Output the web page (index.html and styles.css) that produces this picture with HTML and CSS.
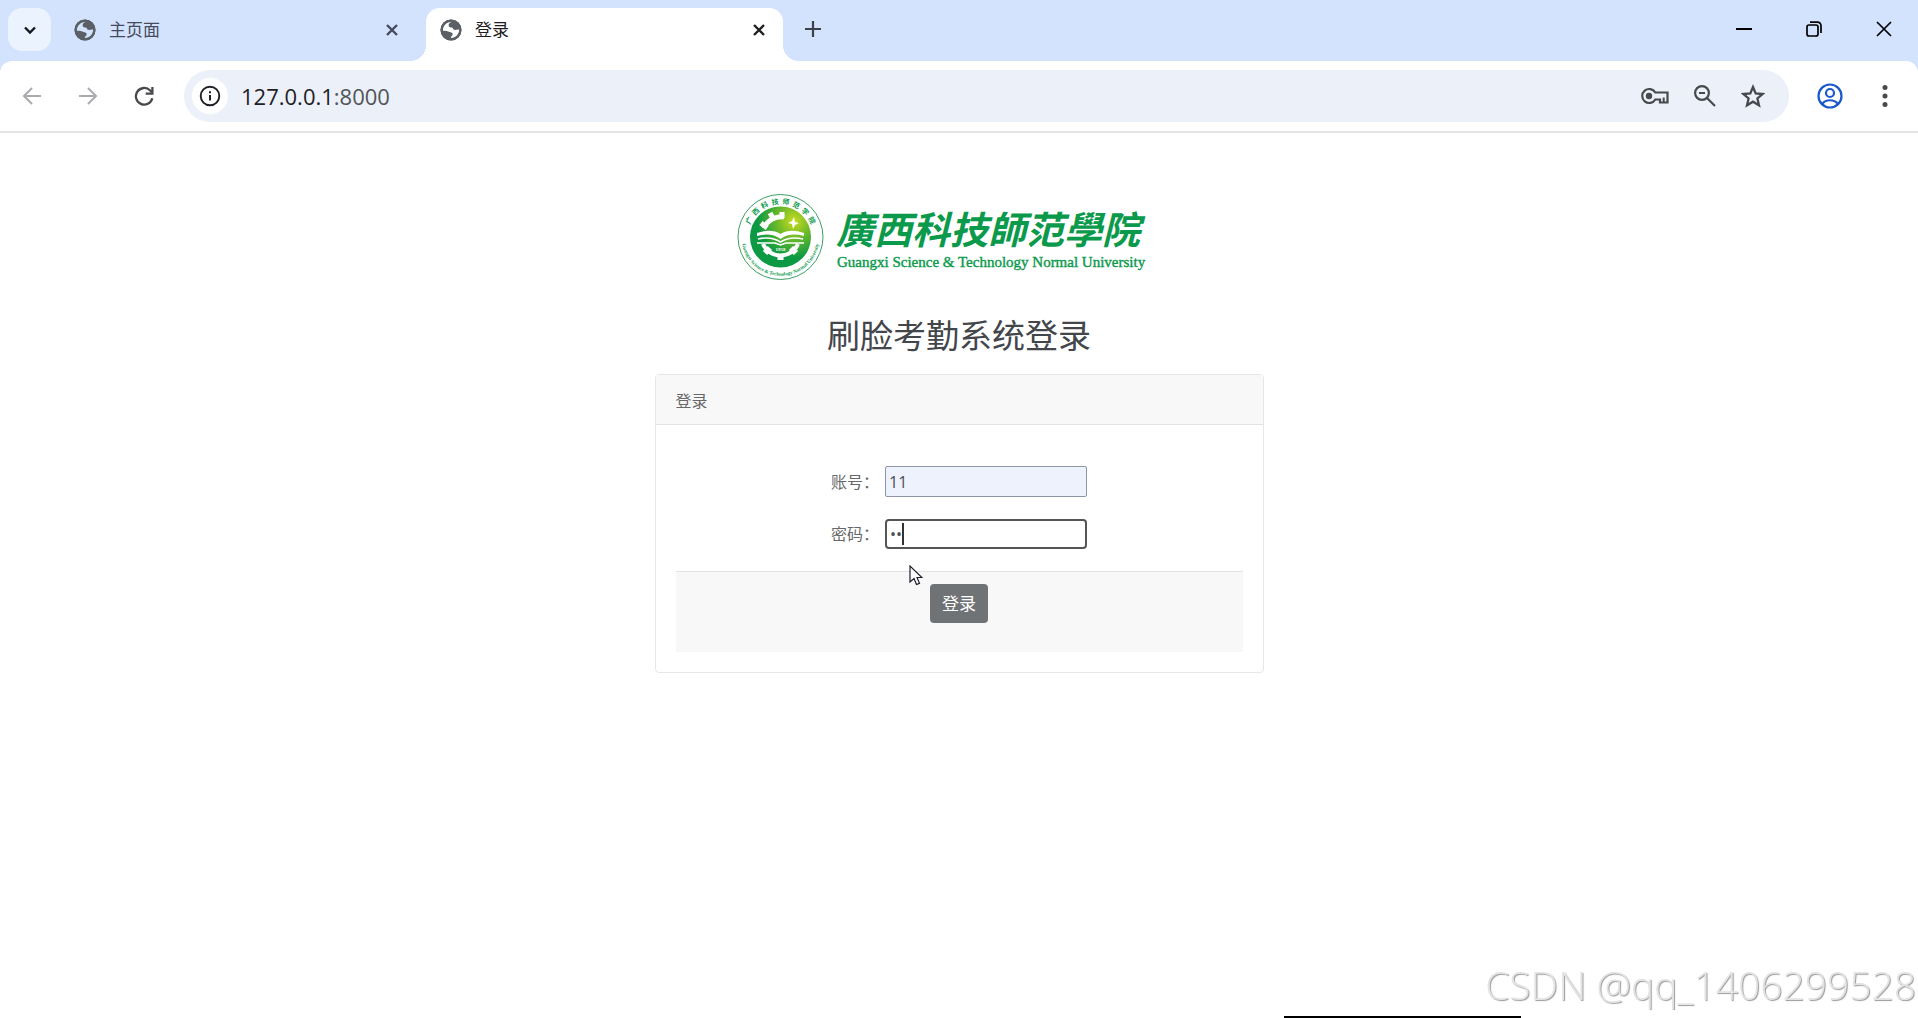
FILE: index.html
```html
<!DOCTYPE html>
<html lang="zh">
<head>
    <meta charset="UTF-8">
    <meta name="viewport" content="width=device-width, initial-scale=1.0">
    <title>登录</title>
    <link rel="stylesheet" href="styles.css">
</head>
<body>
    <header class="browser">
        <div class="tab-strip">
            <button class="tab-search" aria-label="搜索标签页">
                <svg width="14" height="14" viewBox="0 0 14 14"><path d="M2 4.5l5 5 5-5" fill="none" stroke="#15181d" stroke-width="2.4"/></svg>
            </button>

            <div class="tab">
                <svg class="globe" viewBox="0 0 24 24"><circle cx="12" cy="12" r="11.5"/><path class="land" d="M13.5 3c-3 .5-4.500 2.200-4 4.500.3 1.600 2 1.600 3.500 1.700 1.400.2 1 2.300 2.500 2.600 1.800.4 3-.6 5.500-.300-.2 5-3.800 9-9 9.300-.9-1.800 1.700-2.300 1.900-4.300.1-1.800-1.900-1.600-3.400-2.300-1.700-.8-4.500-1.400-7.300-1.400C2.900 7.500 7.500 2.700 13.500 3z"/><circle class="ring" cx="12" cy="12" r="10.4"/></svg>
                <span class="tab-title">主页面</span>
                <button class="tab-close" aria-label="关闭">
                    <svg width="14" height="14" viewBox="0 0 14 14"><path d="M2 2l10 10M12 2L2 12" stroke="currentColor" stroke-width="2.4"/></svg>
                </button>
            </div>

            <div class="tab active">
                <svg class="globe" viewBox="0 0 24 24"><circle cx="12" cy="12" r="11.5"/><path class="land" d="M13.5 3c-3 .5-4.500 2.200-4 4.500.3 1.600 2 1.600 3.500 1.700 1.400.2 1 2.300 2.500 2.600 1.800.4 3-.6 5.500-.300-.2 5-3.800 9-9 9.300-.9-1.800 1.700-2.300 1.900-4.300.1-1.800-1.900-1.600-3.400-2.300-1.700-.8-4.500-1.400-7.300-1.400C2.900 7.500 7.500 2.700 13.500 3z"/><circle class="ring" cx="12" cy="12" r="10.4"/></svg>
                <span class="tab-title">登录</span>
                <button class="tab-close" aria-label="关闭">
                    <svg width="14" height="14" viewBox="0 0 14 14"><path d="M2 2l10 10M12 2L2 12" stroke="currentColor" stroke-width="2.4"/></svg>
                </button>
            </div>

            <button class="new-tab" aria-label="新标签页">
                <svg width="16" height="16" viewBox="0 0 16 16"><path d="M8 0v16M0 8h16" stroke="#3c414b" stroke-width="2.2"/></svg>
            </button>

            <div class="window-buttons">
                <button aria-label="最小化"><svg width="16" height="16" viewBox="0 0 16 16"><path d="M0 8h16" stroke="#000" stroke-width="2"/></svg></button>
                <button aria-label="还原"><svg width="16" height="16" viewBox="0 0 16 16" fill="none" stroke="#000" stroke-width="1.7"><rect x="1" y="4" width="11" height="11" rx="2"/><path d="M4 1.200h7.500a3.500 3.500 0 0 1 3.500 3.500V12"/></svg></button>
                <button aria-label="关闭窗口"><svg width="16" height="16" viewBox="0 0 16 16"><path d="M1 1l14 14M15 1L1 15" stroke="#000" stroke-width="1.7"/></svg></button>
            </div>
        </div>

        <div class="toolbar">
            <button class="nav-btn off" aria-label="后退"><svg width="20" height="20" viewBox="0 0 20 20"><path d="M19 10H2M10 2l-8 8 8 8" fill="none" stroke="currentColor" stroke-width="2"/></svg></button>
            <button class="nav-btn off" aria-label="前进"><svg width="20" height="20" viewBox="0 0 20 20"><path d="M1 10h17M10 2l8 8-8 8" fill="none" stroke="currentColor" stroke-width="2"/></svg></button>
            <button class="nav-btn" aria-label="重新加载"><svg width="20" height="20" viewBox="0 0 20 20" fill="none" stroke="currentColor" stroke-width="2.3"><path d="M18.300 12.200A8.300 8.300 0 1 1 16.200 4.500L18 6.500"/><path d="M18.400 1v6.700h-6.700"/></svg></button>

            <div class="address-bar">
                <button class="site-info" aria-label="网站信息">
                    <svg width="22" height="22" viewBox="0 0 22 22"><circle cx="11" cy="11" r="9.300" fill="none" stroke="#1f2023" stroke-width="1.900"/><path d="M11 10v5.500M11 6.200v2" stroke="#1f2023" stroke-width="2"/></svg>
                </button>
                <span class="url">127.0.0.1<span class="port">:8000</span></span>
                <div class="address-icons">
                    <button aria-label="密码"><svg width="28" height="18" viewBox="0 0 28 18"><path d="M14.300 5.500A7 7 0 1 0 14.300 12.500H19v3h7.500V5.500z" fill="none" stroke="#47494d" stroke-width="2.200"/><circle cx="8" cy="9" r="3.200" fill="#47494d"/><path d="M22.700 10.500v4.500" stroke="#47494d" stroke-width="2"/></svg></button>
                    <button aria-label="缩放"><svg width="22" height="22" viewBox="0 0 22 22" fill="none" stroke="#47494d" stroke-width="2.200"><circle cx="8" cy="8" r="6.900"/><path d="M13 13l8 8M5 8h6"/></svg></button>
                    <button aria-label="收藏"><svg width="24" height="24" viewBox="0 0 24 24"><path d="M12 3l2.700 6.400 6.900.6-5.200 4.500 1.600 6.800-6-3.600-6 3.600 1.600-6.800L2.400 10l6.900-.6z" fill="none" stroke="#47494d" stroke-width="2.300"/></svg></button>
                </div>
            </div>

            <button class="profile" aria-label="用户"><svg width="26" height="26" viewBox="0 0 26 26" fill="none" stroke="#1a59ca" stroke-width="2.200"><circle cx="13" cy="13" r="11.500"/><circle cx="13" cy="10" r="4"/><path d="M5 21c4-5 12-5 16 0"/></svg></button>
            <button class="menu" aria-label="菜单"><svg width="6" height="24" viewBox="0 0 6 24" fill="#47494d"><circle cx="3" cy="3.500" r="2.500"/><circle cx="3" cy="12" r="2.500"/><circle cx="3" cy="20.500" r="2.500"/></svg></button>
        </div>
    </header>

    <main class="page">
        <svg class="logo" width="444" height="88" viewBox="0 0 444 88">
            <defs>
                <radialGradient id="sealFill" cx="72%" cy="24%" r="60%">
                    <stop offset="0" stop-color="#c9dc1e"/>
                    <stop offset="0.450" stop-color="#6fba2a"/>
                    <stop offset="1" stop-color="#0b9a43"/>
                </radialGradient>
                <path id="arcTop" d="M10.500 44a33 33 0 0 1 66 0"/>
                <path id="arcBottom" d="M5.500 35a39 39 0 1 0 76 0"/>
            </defs>
            <circle cx="43.500" cy="44" r="42.500" fill="#fff" stroke="#3d9f62"/>
            <text class="seal-cn"><textPath href="#arcTop" startOffset="50%">广&#160; 西&#160; 科&#160; 技&#160; 师&#160; 范&#160; 学&#160; 院</textPath></text>
            <text class="seal-en"><textPath href="#arcBottom" startOffset="50%">Guangxi Science &amp; Technology Normal University</textPath></text>
            <circle cx="43.500" cy="44" r="30.500" fill="url(#sealFill)"/>
            <path d="M27 35a19 19 0 0 1 20-11" fill="none" stroke="#fff" stroke-width="5"/>
            <path d="M24 30l6 5M33 20l4 7M45 19v6" stroke="#fff" stroke-width="5"/>
            <path d="M26 51a19 19 0 0 0 35 0" fill="none" stroke="#fff" stroke-width="4"/>
            <path d="M28 60l5-5M43.500 67v-6M59 60l-5-5" stroke="#fff" stroke-width="6"/>
            <path d="M20 40q14-5 23.500 1 9.500-6 23.500-1v3q-14-4-23.500 3-9.500-7-23.500-3z" fill="#fff"/>
            <path d="M21 46q13-3 22.500 3Q53 43 66 46M20 50h18l5.500 2 5.500-2h18" fill="none" stroke="#fff" stroke-width="1.600"/>
            <path d="M57 24l1 5 4 1-4 2-2 4-1-5-4-1 4-2z" fill="#fff"/>
            <text class="seal-year" x="43.500" y="58">1958</text>
            <text class="logo-cn" x="99" y="51">廣西科技師范學院</text>
            <text class="logo-en" x="100" y="74">Guangxi Science &amp; Technology Normal University</text>
        </svg>

        <h1>刷脸考勤系统登录</h1>

        <div class="card">
            <div class="card-header">登录</div>
            <form class="card-body">
                <div class="field">
                    <label for="account">账号：</label>
                    <input type="text" id="account" class="filled" value="11">
                </div>
                <div class="field">
                    <label for="password">密码：</label>
                    <div class="password-box">
                        <input type="password" id="password" class="focused" value="11">
                        <span class="caret"></span>
                    </div>
                </div>
                <div class="card-footer">
                    <button type="button" class="login-btn">登录</button>
                    <svg class="pointer" width="14" height="22" viewBox="0 0 14 22"><path d="M1 1v16l4-3.500 2.500 6 3-1.200L8 12.500h5z" fill="#fff" stroke="#1d1d2b" stroke-width="1.200"/></svg>
                </div>
            </form>
        </div>
    </main>

    <div class="watermark">CSDN @qq_1406299528</div>
    <div class="bottom-line"></div>
</body>
</html>
```
FILE: styles.css
```css
* {
    box-sizing: border-box;
}

body {
    margin: 0;
    min-height: 100vh;
    background-color: #fff;
    color: #66686a;
    font-family: "Open Sans", "Noto Sans CJK SC", sans-serif;
    font-size: 16px;
    line-height: 24px;
}

button {
    display: flex;
    align-items: center;
    justify-content: center;
    padding: 0;
    border: none;
    background: none;
    color: inherit;
    font-family: inherit;
}

svg {
    display: block;
    flex-shrink: 0;
}

/* browser bar */
.browser {
    background-color: #d3e3fd;
}

.tab-strip {
    display: flex;
    align-items: flex-end;
    height: 61px;
}

.tab-search {
    width: 43px;
    height: 43px;
    margin: 0 8px 10px;
    border-radius: 14px;
    background-color: #ebf3fe;
}

.tab {
    display: flex;
    align-items: center;
    flex: 0 1 367px;
    height: 53px;
    padding: 0 27px 9px 15px;
    color: #454a5c;
}

.tab.active {
    position: relative;
    flex-basis: 357px;
    padding: 0 17px 9px 14px;
    border-radius: 14px 14px 0 0;
    background-color: #fff;
    color: #1f1f1f;
}

.tab.active::before,
.tab.active::after {
    content: "";
    position: absolute;
    bottom: 0;
    width: 16px;
    height: 16px;
}

.tab.active::before {
    right: 100%;
    background: radial-gradient(circle at 0 0, transparent 16px, #fff 16px);
}

.tab.active::after {
    left: 100%;
    background: radial-gradient(circle at 100% 0, transparent 16px, #fff 16px);
}

.globe {
    width: 22px;
    height: 22px;
    margin-right: 13px;
    fill: #5a6066;
}

.globe .land {
    fill: #d3e3fd;
}

.globe .ring {
    fill: none;
    stroke: #5a6066;
    stroke-width: 2;
}

.active .globe .land {
    fill: #fff;
}

.tab-title {
    flex: 1;
    font-size: 17px;
}

.new-tab {
    width: 32px;
    height: 32px;
    margin: 0 0 16px 14px;
}

.window-buttons {
    display: flex;
    gap: 54px;
    margin: 0 26px 24px auto;
}

.toolbar {
    display: flex;
    align-items: center;
    height: 72px;
    padding: 0 30px 0 22px;
    border-bottom: 2px solid #e3e4e6;
    border-radius: 12px 12px 0 0;
    background-color: #fff;
}

.nav-btn {
    width: 20px;
    margin-right: 36px;
    color: #47494d;
}

.nav-btn.off {
    color: #a9abae;
}

.address-bar {
    display: flex;
    align-items: center;
    flex: 1;
    height: 52px;
    margin-right: 28px;
    margin-left: -6px;
    padding: 0 24px 0 8px;
    border-radius: 26px;
    background-color: #ebf0f9;
}

.site-info {
    width: 36px;
    height: 36px;
    border-radius: 50%;
    background-color: #fff;
}

.url {
    flex: 1;
    margin-left: 13px;
    color: #1f2023;
    font-size: 22px;
}

.port {
    color: #515459;
}

.address-icons {
    display: flex;
    align-items: center;
    gap: 25px;
}

.menu {
    margin-left: 39px;
}

/* login page */
.page {
    display: flex;
    flex-direction: column;
    align-items: center;
    padding-top: 60px;
}

.logo text {
    fill: #0b9a4b;
}

.logo .logo-cn {
    font: italic bold 38px "Noto Sans CJK TC", sans-serif;
}

.logo .logo-en {
    stroke: #0b9a4b;
    stroke-width: 0.4px;
    font: 15px "Liberation Serif", serif;
}

.logo .seal-cn {
    font: bold 7px "Noto Sans CJK SC", sans-serif;
    text-anchor: middle;
}

.logo .seal-en {
    font: bold 5px "Liberation Serif", serif;
    text-anchor: middle;
}

.logo .seal-year {
    fill: #fff;
    font: bold 5px "Liberation Serif", serif;
    text-anchor: middle;
}

h1 {
    margin: 35px 0 18px;
    color: #43464b;
    font-size: 33px;
    font-weight: 400;
    line-height: 40px;
}

.card {
    width: 100%;
    max-width: 609px;
    border: 1px solid #e6e7e8;
    border-radius: 4px;
}

.card-header {
    padding: 14px 20px 11px;
    border-bottom: 1px solid #e2e3e4;
    background-color: #f8f8f8;
}

.card-body {
    padding: 41px 20px 20px;
}

.field {
    display: flex;
    align-items: center;
    justify-content: center;
    gap: 6px;
    margin-bottom: 22px;
}

.field label {
    font-size: 16px;
}

.field input {
    display: block;
    width: 202px;
    height: 31px;
    padding: 0 3px;
    border: 1px solid #8f96a8;
    border-radius: 2px;
    outline: none;
    background-color: #fff;
    color: #4c4f54;
    font-family: inherit;
    font-size: 16px;
}

.field input.filled {
    background-color: #edf2fc;
}

.field input.focused {
    height: 30px;
    border: 2px solid #555;
    border-radius: 4px;
}

.password-box {
    position: relative;
}

.caret {
    position: absolute;
    top: 4px;
    left: 17px;
    width: 2px;
    height: 22px;
    background-color: #333;
}

.card-footer {
    position: relative;
    display: flex;
    justify-content: center;
    padding: 12px 20px 29px;
    border-top: 1px solid #e2e3e4;
    background-color: #f8f8f8;
}

.login-btn {
    padding: 8px 12px 7px;
    border-radius: 4px;
    background-color: #707376;
    color: #fff;
    font-size: 17px;
    line-height: 24px;
}

.pointer {
    position: absolute;
    top: -7px;
    left: 233px;
}

/* overlays at the bottom of the window */
.watermark {
    position: fixed;
    right: 2px;
    bottom: 9px;
    color: #e4e4e4;
    font-family: "Open Sans", sans-serif;
    font-size: 39px;
    font-weight: 300;
    line-height: 48px;
    text-shadow: 1px 1px 1px #999;
}

.bottom-line {
    position: fixed;
    right: 397px;
    bottom: 0;
    width: 237px;
    height: 2px;
    background-color: #000;
}
```
